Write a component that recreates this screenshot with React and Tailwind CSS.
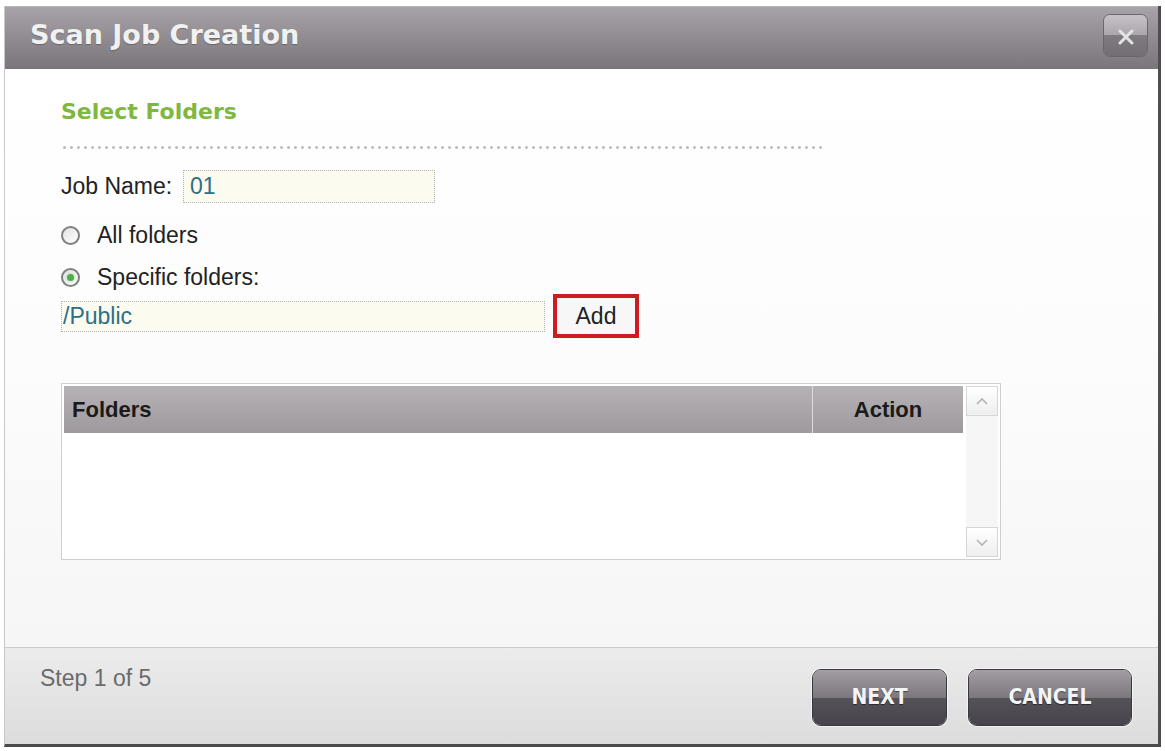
import React, { useState } from "react";

const body = { fontFamily: "'Liberation Sans', Arial, sans-serif" };
const heading = { fontFamily: "'DejaVu Sans', Verdana, sans-serif" };
const condensed = { fontFamily: "'DejaVu Sans Condensed', 'DejaVu Sans', sans-serif" };

function Radio({ checked, onClick, label }) {
  return (
    <div className="flex items-center h-[24px] cursor-pointer" onClick={onClick}>
      <span className="w-[19px] h-[19px] rounded-full border-2 border-[#808080] bg-gradient-to-br from-[#e2e2e2] to-white flex items-center justify-center shrink-0">
        {checked && <span className="w-[7px] h-[7px] rounded-full bg-[#4fae4a] shadow-[0_0_3px_#8fd68a]" />}
      </span>
      <span className="ml-[17px] text-[23px] leading-none text-[#222]">{label}</span>
    </div>
  );
}

function Chevron({ up }) {
  return (
    <svg width="14" height="9" viewBox="0 0 14 9">
      <polyline points={up ? "2,7 7,2 12,7" : "2,2 7,7 12,2"} fill="none" stroke="#b4b4b4" strokeWidth="1.6" />
    </svg>
  );
}

export default function App() {
  const [mode, setMode] = useState("specific");
  const [jobName, setJobName] = useState("01");
  const [folder, setFolder] = useState("/Public");

  return (
    <div className="w-[1165px] h-[751px] bg-white pt-[6px] pl-[4px]" style={body}>
      <div className="w-[1157px] h-[741px] flex flex-col border-l border-[#c8c8c8] border-r-[3px] border-r-[#4e4e4e] border-b-[3px] border-b-[#4a4a4a]">
        {/* Title bar */}
        <div className="h-[63px] shrink-0 flex items-center justify-between bg-gradient-to-b from-[#a7a3a8] to-[#79757a] border-t border-[#b8b4b9] pl-[25px] pr-[10px]">
          <h1 className="text-[27px] font-bold text-[#f1f1f1] pb-[6px] [text-shadow:0_1px_1px_rgba(0,0,0,0.25)]" style={heading}>
            Scan Job Creation
          </h1>
          <button className="w-[45px] h-[43px] mb-[6px] rounded-[7px] border border-[#6a666b] overflow-hidden flex flex-col relative shadow-[inset_0_1px_0_rgba(255,255,255,0.4)]">
            <span className="h-1/2 w-full bg-gradient-to-b from-[#c6c2c7] to-[#aaa6ab]" />
            <span className="h-1/2 w-full bg-gradient-to-b from-[#7f7b80] to-[#726e73]" />
            <svg className="absolute left-[14px] top-[14px]" width="16" height="16" viewBox="0 0 16 16">
              <path d="M2 2 L14 14 M14 2 L2 14" stroke="#e4e4e4" strokeWidth="3" strokeLinecap="round" />
            </svg>
          </button>
        </div>

        {/* Body */}
        <div className="flex-1 bg-gradient-to-b from-white via-[#fcfcfc] to-[#f6f6f6] pl-[56px]">
          <h2 className="mt-[32px] text-[22px] leading-none font-bold text-[#7fb73f]" style={heading}>
            Select Folders
          </h2>
          <div className="mt-[23px] w-[762px] h-[3px] bg-[radial-gradient(circle,#bcbcbc_1.2px,transparent_1.6px)] bg-[length:7px_3px]" />

          <div className="mt-[21px] flex items-center h-[33px]">
            <span className="text-[23px] leading-none text-[#222] w-[122px]">Job Name:</span>
            <input
              value={jobName}
              onChange={(e) => setJobName(e.target.value)}
              className="w-[252px] h-[33px] bg-[#fbfbef] border border-dotted border-[#b2b2b2] px-[6px] text-[23px] text-[#2d6f86] outline-none"
              style={body}
            />
          </div>

          <div className="mt-[20px]">
            <Radio label="All folders" checked={mode === "all"} onClick={() => setMode("all")} />
          </div>
          <div className="mt-[18px]">
            <Radio label="Specific folders:" checked={mode === "specific"} onClick={() => setMode("specific")} />
          </div>

          <div className="mt-[5px] flex items-center h-[44px]">
            <input
              value={folder}
              onChange={(e) => setFolder(e.target.value)}
              className="w-[484px] h-[31px] bg-[#fbfbef] border border-dotted border-[#b2b2b2] px-[1px] text-[23px] text-[#2d6f86] outline-none"
              style={body}
            />
            <button className="ml-[8px] w-[86px] h-[44px] border-[4px] border-[#cc1c22] bg-[#f7f7f7] text-[23px] text-[#222]" style={body}>
              Add
            </button>
          </div>

          {/* Folder table */}
          <div className="mt-[45px] w-[940px] h-[177px] border border-[#cfcfcf] bg-white p-[2px] flex">
            <div className="flex-1 flex flex-col">
              <div className="h-[47px] flex bg-gradient-to-b from-[#b6b2b6] to-[#9d999d]">
                <div className="w-[749px] flex items-center pl-[8px] border-r border-[#dcdcdc] text-[22px] font-bold text-[#1a1a1a]">
                  Folders
                </div>
                <div className="flex-1 flex items-center justify-center text-[22px] font-bold text-[#1a1a1a]">
                  Action
                </div>
              </div>
              <div className="flex-1 bg-white" />
            </div>
            <div className="w-[32px] ml-[3px] flex flex-col justify-between bg-[#f6f6f6]">
              <div className="h-[30px] border border-[#d6d6d6] bg-gradient-to-b from-white to-[#eeeeee] flex items-center justify-center">
                <Chevron up />
              </div>
              <div className="h-[30px] border border-[#d6d6d6] bg-gradient-to-b from-white to-[#eeeeee] flex items-center justify-center">
                <Chevron />
              </div>
            </div>
          </div>
        </div>

        {/* Footer */}
        <div className="h-[97px] shrink-0 border-t border-[#cdcdcd] bg-gradient-to-b from-[#ececec] to-[#dcdcdc] flex justify-between pl-[35px] pr-[26px]">
          <span className="pt-[19px] text-[23px] leading-none text-[#6b6b6b]">Step 1 of 5</span>
          <div className="pt-[21px] flex gap-[21px]">
            {[
              { label: "NEXT", w: "w-[135px]" },
              { label: "CANCEL", w: "w-[164px]" },
            ].map((b) => (
              <button
                key={b.label}
                className={`${b.w} h-[57px] rounded-[9px] border border-[#3a373c] overflow-hidden relative flex flex-col shadow-[0_0_0_1px_rgba(255,255,255,0.6)]`}
              >
                <span className="h-1/2 w-full bg-gradient-to-b from-[#a29ea4] to-[#7b777d]" />
                <span className="h-1/2 w-full bg-gradient-to-b from-[#56525a] to-[#47434a]" />
                <span
                  className="absolute inset-0 flex items-center justify-center text-[21px] font-bold text-[#f4f4f4] [text-shadow:0_1px_1px_rgba(0,0,0,0.5)]"
                  style={condensed}
                >
                  {b.label}
                </span>
              </button>
            ))}
          </div>
        </div>
      </div>
    </div>
  );
}
